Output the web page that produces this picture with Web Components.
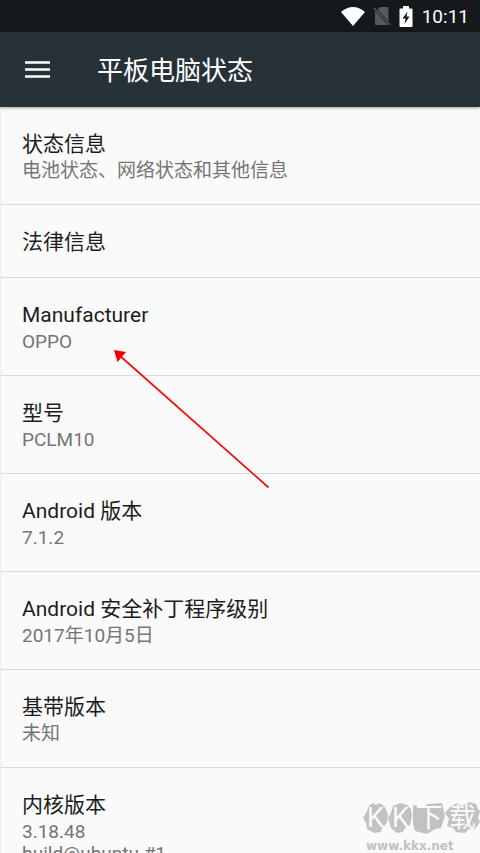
<!DOCTYPE html>
<html lang="zh-CN">
<head>
<meta charset="utf-8">
<meta name="viewport" content="width=device-width, initial-scale=1">
<title>平板电脑状态</title>
<style>
body { margin: 0; background: #fafafa; font-family: Roboto, "Noto Sans CJK SC", sans-serif; }
</style>
</head>
<body>
<device-screen>
  <status-bar slot="status" time="10:11"></status-bar>
  <app-bar slot="bar">平板电脑状态</app-bar>
  <pref-row>状态信息<span slot="summary">电池状态、网络状态和其他信息</span></pref-row>
  <pref-row>法律信息</pref-row>
  <pref-row>Manufacturer<span slot="summary">OPPO</span></pref-row>
  <pref-row>型号<span slot="summary">PCLM10</span></pref-row>
  <pref-row>Android 版本<span slot="summary">7.1.2</span></pref-row>
  <pref-row>Android 安全补丁程序级别<span slot="summary">2017年10月5日</span></pref-row>
  <pref-row>基带版本<span slot="summary">未知</span></pref-row>
  <pref-row>内核版本<span slot="summary">3.18.48<br>build@ubuntu #1</span></pref-row>
  <pointer-arrow slot="overlay"></pointer-arrow>
  <site-mark slot="overlay"></site-mark>
</device-screen>
<script>
function define(name, markup, setup) {
  const template = document.createElement('template');
  template.innerHTML = markup;
  customElements.define(name, class extends HTMLElement {
    constructor() {
      super();
      this.attachShadow({ mode: 'open' }).append(template.content.cloneNode(true));
    }
    connectedCallback() { if (setup) setup(this, this.shadowRoot); }
  });
}

define('device-screen', `
<style>
:host { display: flex; flex-direction: column; position: relative; height: 100vh; overflow: hidden; background: #fafafa; }
main { flex: 1; min-height: 0; overflow: hidden; border-left: 1px solid #ececec; }
</style>
<slot name="status"></slot>
<slot name="bar"></slot>
<main><slot></slot></main>
<slot name="overlay"></slot>`);

define('status-bar', `
<style>
:host { display: flex; flex: none; align-items: center; justify-content: flex-end; gap: 8px; height: 32px; padding-right: 11px; background: #15191c; color: #fff; }
svg { display: block; }
time { font-size: 19px; line-height: 24px; font-weight: 400; padding: 1px 0 0 1px; }
</style>
<svg width="24" height="19" viewBox="0 0 24 19" aria-hidden="true"><path d="M0 5 Q12 -5 24 5 L12 19 Z" fill="#fff"/></svg>
<svg width="18" height="20" viewBox="0 0 18 20" aria-hidden="true"><path d="M7 1 H14 Q15.500 1 15.500 2.500 V15.500 L4.500 3.500 Z M2 5 L15 19 H3 Q2 19 2 18 Z" fill="#58595a"/><path d="M1 2 L17 19" stroke="#58595a" stroke-width="1.600"/></svg>
<svg width="14" height="21" viewBox="0 0 14 21" aria-hidden="true"><path d="M4 0 H10 V2.500 H12.500 Q13.500 2.500 13.500 3.500 V20 Q13.500 21 12.500 21 H1.500 Q.5 21 .5 20 V3.500 Q.5 2.500 1.500 2.500 H4 Z" fill="#fff"/><path d="M8.500 5.500 L3.500 12.500 H6.500 L5.500 18 L10.500 10.500 H7.500 Z" fill="#15191c"/></svg>
<time></time>`, (host, root) => { root.querySelector('time').textContent = host.getAttribute('time'); });

define('app-bar', `
<style>
:host { display: flex; flex: none; align-items: center; gap: 47px; height: 75px; box-sizing: border-box; padding-left: 25px; background: #263238; color: #fff; position: relative; box-shadow: 0 1px 3px rgba(0,0,0,.35); }
button { border: 0; padding: 0; background: none; color: inherit; display: block; }
svg { display: block; }
h1 { margin: 0; padding-top: 2px; font-size: 26px; line-height: 36px; font-weight: 400; }
</style>
<button aria-label="菜单"><svg width="25" height="17" viewBox="0 0 25 17"><path d="M0 1.500H25M0 8.500H25M0 15.500H25" stroke="#fff" stroke-width="2.600"/></svg></button>
<h1><slot></slot></h1>`);

define('pref-row', `
<style>
:host { display: block; padding: 21px 21px 19px 21px; border-bottom: 1px solid #dadada; }
h2 { margin: 0; font-size: 21px; line-height: 32px; font-weight: 400; color: #1c1c1c; }
::slotted([slot=summary]) { display: block; padding-bottom: 3px; font-size: 19px; line-height: 22px; color: #757575; }
</style>
<h2><slot></slot></h2>
<slot name="summary"></slot>`);

define('pointer-arrow', `
<style>
:host { position: absolute; left: 113px; top: 349px; pointer-events: none; }
svg { display: block; }
</style>
<svg width="157" height="140" viewBox="0 0 157 140" aria-hidden="true"><path d="M6 6 L155.500 138.500" stroke="#ee1111" stroke-width="1.800"/><path d="M1 1 L13 3 L4.500 13 Z" fill="#f50000"/></svg>`);

define('site-mark', `
<style>
:host { position: absolute; right: 0; bottom: 0; width: 117px; color: #c2c2c2; pointer-events: none; }
.name { display: grid; width: 117px; height: 34px; }
.name > * { grid-area: 1 / 1; }
.letters { display: grid; grid-template-columns: 25px 25px 32px 35px; justify-items: center; color: #fafafa; font-size: 27px; line-height: 34px; font-weight: 400; }
.site { font: 700 12px/14px "DejaVu Sans", sans-serif; padding: 4px 0 0 3px; }
</style>
<div class="name">
<svg width="117" height="34" viewBox="0 0 117 34" aria-hidden="true"><path d="M6 5 L10 2 L13 4 L17 2 L22 6 L25 14 L24 22 L19 27 L18 31 L11 32 L4 28 L3 22 L0 17 L3 12 Z M30 5 L37 2 L44 4 L48 8 L49 15 L47 24 L42 27 L40 31 L34 32 L28 27 L25 17 L28 12 Z M50 4 L60 6 L65 3 L79 2 L82 15 L78 27 L72 28 L64 33 L52 30 L50 23 Z M87 6 L94 2 L99 5 L106 1 L113 3 L115 8 L117 10 L115 17 L117 21 L112 28 L106 28 L102 32 L93 31 L90 27 L84 25 L86 18 L82 12 Z" fill="#c2c2c2"/></svg>
<div class="letters"><span>K</span><span>K</span><span>下</span><span>载</span></div>
</div>
<div class="site">www.kkx.net</div>`);
</script>
</body>
</html>
